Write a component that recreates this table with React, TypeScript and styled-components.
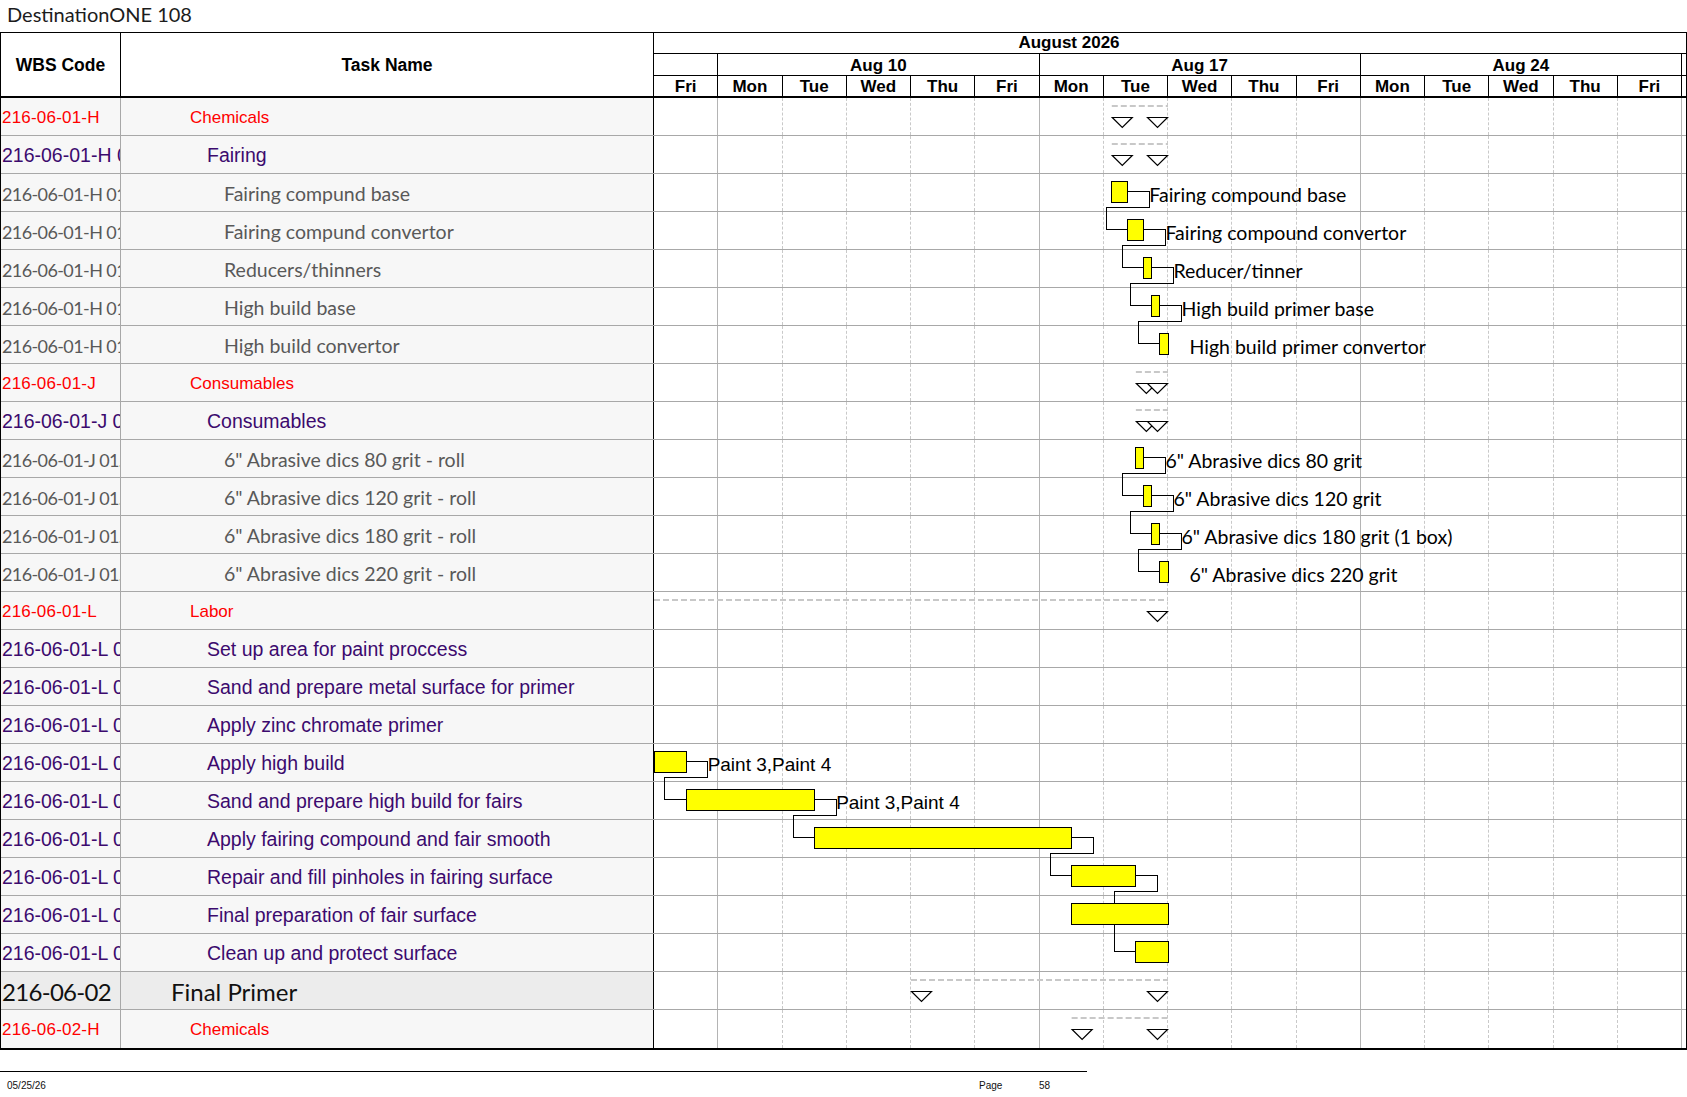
import React from "react";
import styled, { createGlobalStyle } from "styled-components";

const ARIAL = `"Liberation Sans", Arial, sans-serif`;
const CALIBRI = `Lato, "Open Sans", sans-serif`;

const DAY = 64.25;
const ROW_H = 38;
const DAYS = ["Fri", "Mon", "Tue", "Wed", "Thu", "Fri", "Mon", "Tue", "Wed", "Thu", "Fri", "Mon", "Tue", "Wed", "Thu", "Fri"];

type Kind = "red" | "purple" | "gray" | "top";

interface TaskRow {
  wbs: string;
  name: string;
  kind: Kind;
}

const ROWS: TaskRow[] = [
  { wbs: "216-06-01-H", name: "Chemicals", kind: "red" },
  { wbs: "216-06-01-H 01", name: "Fairing", kind: "purple" },
  { wbs: "216-06-01-H 01.01", name: "Fairing compund base", kind: "gray" },
  { wbs: "216-06-01-H 01.02", name: "Fairing compund convertor", kind: "gray" },
  { wbs: "216-06-01-H 01.03", name: "Reducers/thinners", kind: "gray" },
  { wbs: "216-06-01-H 01.04", name: "High build base", kind: "gray" },
  { wbs: "216-06-01-H 01.05", name: "High build convertor", kind: "gray" },
  { wbs: "216-06-01-J", name: "Consumables", kind: "red" },
  { wbs: "216-06-01-J 01", name: "Consumables", kind: "purple" },
  { wbs: "216-06-01-J 01.01", name: '6" Abrasive dics 80 grit - roll', kind: "gray" },
  { wbs: "216-06-01-J 01.02", name: '6" Abrasive dics 120 grit - roll', kind: "gray" },
  { wbs: "216-06-01-J 01.03", name: '6" Abrasive dics 180 grit - roll', kind: "gray" },
  { wbs: "216-06-01-J 01.04", name: '6" Abrasive dics 220 grit - roll', kind: "gray" },
  { wbs: "216-06-01-L", name: "Labor", kind: "red" },
  { wbs: "216-06-01-L 01", name: "Set up area for paint proccess", kind: "purple" },
  { wbs: "216-06-01-L 02", name: "Sand and prepare metal surface for primer", kind: "purple" },
  { wbs: "216-06-01-L 03", name: "Apply zinc chromate primer", kind: "purple" },
  { wbs: "216-06-01-L 04", name: "Apply high build", kind: "purple" },
  { wbs: "216-06-01-L 05", name: "Sand and prepare high build for fairs", kind: "purple" },
  { wbs: "216-06-01-L 06", name: "Apply fairing compound and fair smooth", kind: "purple" },
  { wbs: "216-06-01-L 07", name: "Repair and fill pinholes in fairing surface", kind: "purple" },
  { wbs: "216-06-01-L 08", name: "Final preparation of fair surface", kind: "purple" },
  { wbs: "216-06-01-L 09", name: "Clean up and protect surface", kind: "purple" },
  { wbs: "216-06-02", name: "Final Primer", kind: "top" },
  { wbs: "216-06-02-H", name: "Chemicals", kind: "red" },
];

// summary rows: start/end in days from the first visible Friday; start < 0 = begins off-screen
const SUMMARIES = [
  { row: 0, s: 7.125, e: 8 },
  { row: 1, s: 7.125, e: 8 },
  { row: 7, s: 7.5, e: 8 },
  { row: 8, s: 7.5, e: 8 },
  { row: 13, s: -1, e: 8 },
  { row: 23, s: 4, e: 8 },
  { row: 24, s: 6.5, e: 8 },
];

type LabelFont = "calibri" | "arial";

interface Bar {
  row: number;
  s: number;
  e: number;
  label?: string;
  font?: LabelFont;
}

const BARS: Bar[] = [
  { row: 2, s: 7.125, e: 7.375, label: "Fairing compound base" },
  { row: 3, s: 7.375, e: 7.625, label: "Fairing compound convertor" },
  { row: 4, s: 7.625, e: 7.75, label: "Reducer/tinner" },
  { row: 5, s: 7.75, e: 7.875, label: "High build primer base" },
  { row: 6, s: 7.875, e: 8, label: "High build primer convertor" },
  { row: 9, s: 7.5, e: 7.625, label: '6" Abrasive dics 80 grit' },
  { row: 10, s: 7.625, e: 7.75, label: '6" Abrasive dics 120 grit' },
  { row: 11, s: 7.75, e: 7.875, label: '6" Abrasive dics 180 grit (1 box)' },
  { row: 12, s: 7.875, e: 8, label: '6" Abrasive dics 220 grit' },
  { row: 17, s: 0, e: 0.5, label: "Paint 3,Paint 4", font: "arial" },
  { row: 18, s: 0.5, e: 2.5, label: "Paint 3,Paint 4", font: "arial" },
  { row: 19, s: 2.5, e: 6.5 },
  { row: 20, s: 6.5, e: 7.5 },
  { row: 21, s: 6.5, e: 8 },
  { row: 22, s: 7.5, e: 8 },
];

const LINKS: [number, number][] = [
  [2, 3], [3, 4], [4, 5], [5, 6],
  [9, 10], [10, 11], [11, 12],
  [17, 18], [18, 19], [19, 20], [20, 22],
];

const xd = (d: number) => d * DAY;
const top = (r: number) => r * ROW_H;
const barOf = (row: number) => BARS.find((b) => b.row === row)!;

const GlobalStyle = createGlobalStyle`
  html, body {
    margin: 0;
    padding: 0;
    background: #fff;
  }
  body {
    font-family: ${ARIAL};
  }
`;

const Page = styled.div`
  width: 1687px;
  color: #000;
`;

const Title = styled.div`
  height: 32px;
  padding-left: 7px;
  font-family: ${CALIBRI};
  font-size: 20px;
  line-height: 29px;
  color: #1c1c1c;
  box-sizing: border-box;
`;

const Sheet = styled.div`
  display: flex;
  border: 1px solid #000;
  border-bottom-width: 2px;
  background: #fff;
`;

const LeftPane = styled.div`
  width: 653px;
  flex: none;
`;

const LeftHead = styled.div`
  display: flex;
  height: 65px;
  box-sizing: border-box;
  border-bottom: 2px solid #000;
`;

const HeadCell = styled.div<{ $w: number }>`
  width: ${(p) => p.$w}px;
  flex: none;
  box-sizing: border-box;
  border-right: 1px solid #000;
  padding-top: 2px;
  display: flex;
  align-items: center;
  justify-content: center;
  font-weight: bold;
  font-size: 17.5px;
`;

const LeftRow = styled.div<{ $kind: Kind }>`
  display: flex;
  height: ${ROW_H}px;
  box-sizing: border-box;
  border-bottom: 1px solid #a8a8a8;
  background: ${(p) => (p.$kind === "top" ? "#ececec" : "#f7f7f7")};

  &:last-child {
    border-bottom: none;
  }
`;

const kindFont = (k: Kind) => {
  switch (k) {
    case "red":
      return `font-family: ${ARIAL}; font-size: 17px; color: #f00;`;
    case "purple":
      return `font-family: ${ARIAL}; font-size: 19.5px; color: #3c0a6e;`;
    case "gray":
      return `font-family: ${CALIBRI}; font-size: 19.5px; color: #595959;`;
    default:
      return `font-family: ${CALIBRI}; font-size: 24px; color: #111;`;
  }
};

// the code column uses slightly tighter text so the clipped codes match
const wbsTweak = (k: Kind) => {
  switch (k) {
    case "red":
      return "letter-spacing: 0.2px;";
    case "purple":
      return "letter-spacing: 0;";
    case "gray":
      return "font-size: 18px; letter-spacing: -0.6px;";
    default:
      return "letter-spacing: -0.7px;";
  }
};

const INDENT: Record<Kind, number> = { top: 50, red: 69, purple: 86, gray: 103 };

const WbsCell = styled.div<{ $kind: Kind }>`
  width: 120px;
  flex: none;
  box-sizing: border-box;
  border-right: 1px solid #a8a8a8;
  padding: 2px 0 0 1px;
  overflow: hidden;
  white-space: nowrap;
  display: flex;
  align-items: center;
  ${(p) => kindFont(p.$kind)}
  ${(p) => wbsTweak(p.$kind)}
`;

const NameCell = styled.div<{ $kind: Kind }>`
  width: 533px;
  flex: none;
  box-sizing: border-box;
  border-right: 1px solid #000;
  padding: 2px 0 0 ${(p) => INDENT[p.$kind]}px;
  white-space: nowrap;
  overflow: hidden;
  display: flex;
  align-items: center;
  ${(p) => kindFont(p.$kind)}
`;

const ChartPane = styled.div`
  flex: 1;
  min-width: 0;
`;

const ChartHead = styled.div`
  height: 65px;
  box-sizing: border-box;
  border-bottom: 2px solid #000;
  font-weight: bold;
  font-size: 17px;
`;

const MonthRow = styled.div`
  height: 21px;
  box-sizing: border-box;
  border-bottom: 1px solid #000;
  padding-right: 202px;
  text-align: center;
  line-height: 20px;
`;

const HeadStrip = styled.div<{ $h: number }>`
  display: flex;
  height: ${(p) => p.$h}px;
  box-sizing: border-box;
  border-bottom: ${(p) => (p.$h === 22 ? "1px solid #000" : "none")};
`;

const ScaleCell = styled.div<{ $days: number }>`
  width: ${(p) => p.$days * DAY}px;
  flex: none;
  box-sizing: border-box;
  border-right: 1px solid #000;
  padding-top: 2px;
  display: flex;
  align-items: center;
  justify-content: center;
`;

const Sliver = styled.div`
  flex: 1;
`;

const ChartBody = styled.div`
  position: relative;
`;

const ChartRow = styled.div`
  display: flex;
  height: ${ROW_H}px;
  box-sizing: border-box;
  border-bottom: 1px solid #a8a8a8;

  &:last-of-type {
    border-bottom: none;
  }
`;

const GridDay = styled.div<{ $weekEnd: boolean }>`
  width: ${DAY}px;
  flex: none;
  box-sizing: border-box;
  border-right: 1px ${(p) => (p.$weekEnd ? "solid #b4b4b4" : "dashed #c9c9c9")};
`;

const Overlay = styled.svg`
  position: absolute;
  left: 0;
  top: 0;
  width: 100%;
  height: 100%;
  overflow: visible;
  pointer-events: none;
`;

const Footer = styled.div`
  margin-top: 21px;
  width: 1087px;
  box-sizing: border-box;
  border-top: 1px solid #000;
  display: grid;
  grid-template-columns: 972px 60px auto;
  padding: 8px 0 0 7px;
  font-family: ${ARIAL};
  font-size: 10px;
  line-height: 12px;
  color: #111;
`;

const GanttOverlay = () => {
  const linkPaths = LINKS.map(([p, s]) => {
    const pb = barOf(p);
    const sb = barOf(s);
    const pe = xd(pb.e);
    const L = pe + 21.5;
    const yb = top(p) + 33;
    const sx = xd(sb.s);
    const vx = sx - 21.5;
    return `M${pe} ${top(p) + 17.5} H${L} V${yb} H${vx} V${top(s) + 17.5} H${sx}`;
  });

  return (
    <Overlay>
      {linkPaths.map((d, i) => (
        <path key={i} d={d} fill="none" stroke="#000" strokeWidth={1} shapeRendering="crispEdges" />
      ))}

      {SUMMARIES.map((s) => {
        const y = top(s.row) + 1;
        const sx = s.s < 0 ? 0 : xd(s.s);
        const ex = xd(s.e);
        return (
          <g key={s.row}>
            <line x1={sx} x2={ex} y1={y + 7} y2={y + 7} stroke="#c8c8c8" strokeWidth={2} strokeDasharray="6 3" />
            {s.s >= 0 && (
              <polygon
                points={`${sx + 0.5},${y + 18.5} ${sx + 20.5},${y + 18.5} ${sx + 10.5},${y + 28.5}`}
                fill="#fff"
                stroke="#000"
                strokeWidth={1.2}
              />
            )}
            <polygon
              points={`${ex - 20.5},${y + 18.5} ${ex - 0.5},${y + 18.5} ${ex - 10.5},${y + 28.5}`}
              fill="#fff"
              stroke="#000"
              strokeWidth={1.2}
            />
          </g>
        );
      })}

      {BARS.map((b) => (
        <rect
          key={b.row}
          x={xd(b.s)}
          y={top(b.row) + 7}
          width={xd(b.e) - xd(b.s)}
          height={21}
          fill="#ffff00"
          stroke="#000"
          strokeWidth={1}
          shapeRendering="crispEdges"
        />
      ))}

      {BARS.filter((b) => b.label).map((b) => (
        <text
          key={b.row}
          x={xd(b.e) + 21.5}
          y={top(b.row) + 20}
          dominantBaseline="central"
          fontFamily={b.font === "arial" ? ARIAL : CALIBRI}
          fontSize={b.font === "arial" ? 19 : 19.5}
          fill="#000"
        >
          {b.label}
        </text>
      ))}
    </Overlay>
  );
};

const App = () => {
  return (
    <Page>
      <GlobalStyle />
      <Title>DestinationONE 108</Title>
      <Sheet>
        <LeftPane>
          <LeftHead>
            <HeadCell $w={120}>WBS Code</HeadCell>
            <HeadCell $w={533}>Task Name</HeadCell>
          </LeftHead>
          {ROWS.map((r, i) => (
            <LeftRow key={i} $kind={r.kind}>
              <WbsCell $kind={r.kind}>{r.wbs}</WbsCell>
              <NameCell $kind={r.kind}>{r.name}</NameCell>
            </LeftRow>
          ))}
        </LeftPane>

        <ChartPane>
          <ChartHead>
            <MonthRow>August 2026</MonthRow>
            <HeadStrip $h={22}>
              <ScaleCell $days={1} />
              <ScaleCell $days={5}>Aug 10</ScaleCell>
              <ScaleCell $days={5}>Aug 17</ScaleCell>
              <ScaleCell $days={5}>Aug 24</ScaleCell>
              <Sliver />
            </HeadStrip>
            <HeadStrip $h={20}>
              {DAYS.map((d, i) => (
                <ScaleCell key={i} $days={1}>
                  {d}
                </ScaleCell>
              ))}
              <Sliver />
            </HeadStrip>
          </ChartHead>

          <ChartBody>
            {ROWS.map((_, i) => (
              <ChartRow key={i}>
                {DAYS.map((d, j) => (
                  <GridDay key={j} $weekEnd={d === "Fri"} />
                ))}
              </ChartRow>
            ))}
            <GanttOverlay />
          </ChartBody>
        </ChartPane>
      </Sheet>

      <Footer>
        <span>05/25/26</span>
        <span>Page</span>
        <span>58</span>
      </Footer>
    </Page>
  );
};

export default App;
